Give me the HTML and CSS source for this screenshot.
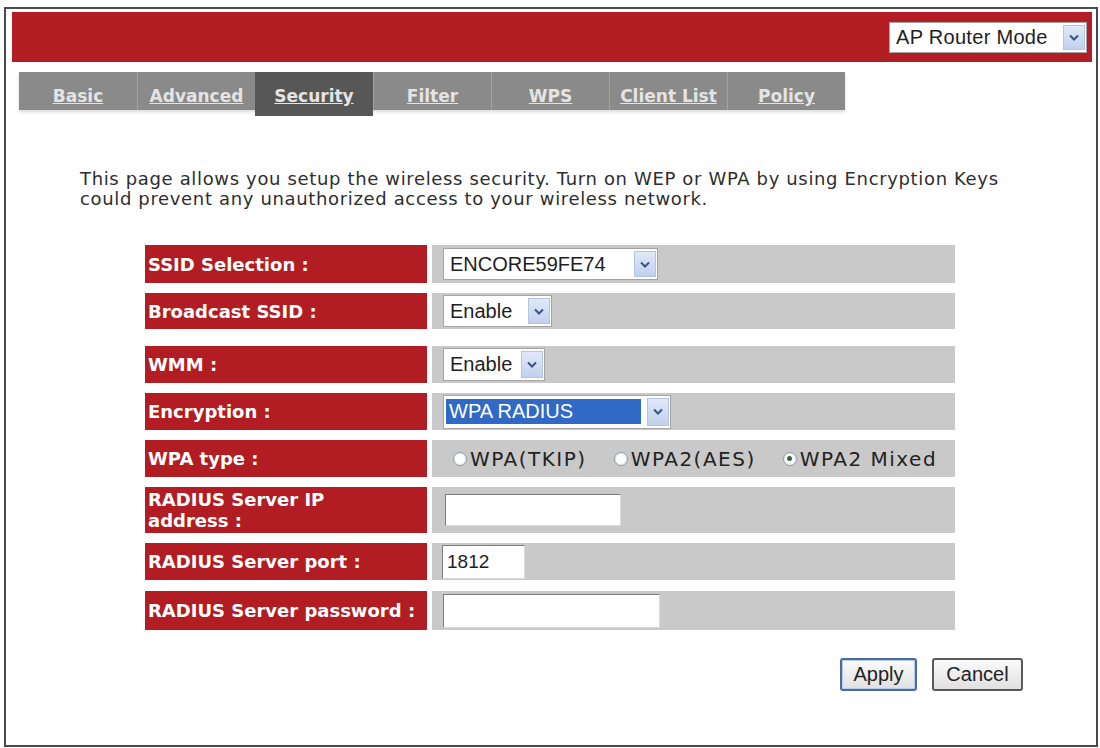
FILE: index.html
```html
<!DOCTYPE html>
<html lang="en">
<head>
    <meta charset="UTF-8">
    <meta name="viewport" content="width=device-width, initial-scale=1.0">
    <title>Wireless Security</title>
    <link rel="stylesheet" href="styles.css">
</head>
<body>
    <div class="frame">
        <div class="topbar">
            <div class="sel mode">
                <span>AP Router Mode</span>
                <i class="arr"><svg width="10" height="7" viewBox="0 0 10 7"><path d="M1 1.5L5 5.5L9 1.5" fill="none" stroke="#36548c" stroke-width="2"/></svg></i>
            </div>
        </div>

        <ul class="tabs">
            <li><a href="#">Basic</a></li>
            <li><a href="#">Advanced</a></li>
            <li class="on"><a href="#">Security</a></li>
            <li><a href="#">Filter</a></li>
            <li><a href="#">WPS</a></li>
            <li><a href="#">Client List</a></li>
            <li><a href="#">Policy</a></li>
        </ul>

        <p class="intro">This page allows you setup the wireless security. Turn on WEP or WPA by using Encryption Keys<br>could prevent any unauthorized access to your wireless network.</p>

        <div class="form">
            <div class="row">
                <div class="lbl">SSID Selection :</div>
                <div class="val">
                    <div class="sel ssid">
                        <span>ENCORE59FE74</span>
                        <i class="arr"><svg width="10" height="7" viewBox="0 0 10 7"><path d="M1 1.5L5 5.5L9 1.5" fill="none" stroke="#36548c" stroke-width="2"/></svg></i>
                    </div>
                </div>
            </div>
            <div class="row short">
                <div class="lbl">Broadcast SSID :</div>
                <div class="val">
                    <div class="sel bcast">
                        <span>Enable</span>
                        <i class="arr"><svg width="10" height="7" viewBox="0 0 10 7"><path d="M1 1.5L5 5.5L9 1.5" fill="none" stroke="#36548c" stroke-width="2"/></svg></i>
                    </div>
                </div>
            </div>
            <div class="row wmm-row">
                <div class="lbl">WMM :</div>
                <div class="val">
                    <div class="sel wmm">
                        <span>Enable</span>
                        <i class="arr"><svg width="10" height="7" viewBox="0 0 10 7"><path d="M1 1.5L5 5.5L9 1.5" fill="none" stroke="#36548c" stroke-width="2"/></svg></i>
                    </div>
                </div>
            </div>
            <div class="row">
                <div class="lbl">Encryption :</div>
                <div class="val">
                    <div class="sel enc">
                        <span class="hl">WPA RADIUS</span>
                        <i class="arr"><svg width="10" height="7" viewBox="0 0 10 7"><path d="M1 1.5L5 5.5L9 1.5" fill="none" stroke="#36548c" stroke-width="2"/></svg></i>
                    </div>
                </div>
            </div>
            <div class="row">
                <div class="lbl">WPA type :</div>
                <div class="val radios">
                    <label class="radio"><input type="radio" name="wpa">WPA(TKIP)</label>
                    <label class="radio"><input type="radio" name="wpa">WPA2(AES)</label>
                    <label class="radio"><input type="radio" name="wpa" checked>WPA2 Mixed</label>
                </div>
            </div>
            <div class="row tall">
                <div class="lbl">RADIUS Server IP<br>address :</div>
                <div class="val"><input class="txt ip" type="text"></div>
            </div>
            <div class="row">
                <div class="lbl">RADIUS Server port :</div>
                <div class="val"><input class="txt port" type="text" value="1812"></div>
            </div>
            <div class="row last">
                <div class="lbl">RADIUS Server password :</div>
                <div class="val"><input class="txt pass" type="password"></div>
            </div>
        </div>

        <div class="btns">
            <button class="btn apply">Apply</button>
            <button class="btn cancel">Cancel</button>
        </div>
    </div>
</body>
</html>
```

FILE: styles.css
```css
body{
    margin: 0;
    background: #fff;
    font-family: "DejaVu Sans", Verdana, sans-serif;
}
.frame{
    box-sizing: border-box;
    width: 1094px;
    height: 740px;
    margin: 7px 0 0 4px;
    border: 2px solid #4a4a4a;
    padding: 3px 4px 0 6px;
}

/* red header with mode picker */
.topbar{
    box-sizing: border-box;
    height: 50px;
    background: #b21e23;
    display: flex;
    justify-content: flex-end;
    align-items: flex-start;
    padding: 10px 5px 0 0;
}
.sel{
    box-sizing: border-box;
    display: flex;
    align-items: center;
    justify-content: space-between;
    background: #fff;
    border: 1px solid #a4a4a4;
    padding-left: 6px;
    font-family: "Liberation Sans", Arial, sans-serif;
    font-size: 20px;
    color: #1e1e1e;
}
.sel .arr{
    box-sizing: border-box;
    width: 22px;
    height: calc(100% - 4px);
    margin-right: 1px;
    display: flex;
    align-items: center;
    justify-content: center;
    background: linear-gradient(#e1e9f8, #c2d0ee);
    border: 1px solid #b4c4e4;
}
.mode{
    width: 198px;
    height: 31px;
    letter-spacing: 0.3px;
}

/* tabs */
.tabs{
    list-style: none;
    margin: 10px 0 0 7px;
    padding: 0;
    width: 826px;
    display: grid;
    grid-template-columns: repeat(7, 118px);
    grid-template-rows: 38px;
    background: #8a8a8a;
    box-shadow: 0 2px 3px rgba(0,0,0,0.15);
}
.tabs li{
    box-sizing: border-box;
    height: 38px;
    padding-top: 10px;
    display: flex;
    align-items: center;
    justify-content: center;
}
.tabs li + li{
    border-left: 1px solid #a2a2a2;
}
.tabs li.on{
    height: 44px;
    padding-bottom: 6px;
    background: #575757;
    border-left: none;
}
.tabs a{
    color: #e4e4e4;
    font-weight: bold;
    font-size: 17px;
    text-decoration: underline;
}

.intro{
    margin: 59px 0 0 68px;
    font-size: 18px;
    line-height: 20px;
    letter-spacing: 0.65px;
    color: #2e2e2e;
}

/* settings table */
.form{
    margin: 36px 0 0 133px;
}
.row{
    display: grid;
    grid-template-columns: 282px 523px;
    column-gap: 5px;
    height: 37px;
    margin-bottom: 10px;
}
.row:first-child{
    height: 38px;
}
.row.short{
    height: 36px;
}
.row.wmm-row{
    margin-top: 17px;
}
.row.tall{
    height: 46px;
}
.row.last{
    height: 39px;
    margin-top: 11px;
    margin-bottom: 0;
}
.lbl{
    display: flex;
    align-items: center;
    padding-left: 3px;
    background: #b11d22;
    color: #fff;
    font-weight: bold;
    font-size: 18px;
    line-height: 21px;
}
.val{
    display: flex;
    align-items: center;
    padding-left: 11px;
    background: #c9c9c9;
    overflow: hidden;
}
.ssid{
    width: 215px;
    height: 32px;
}
.bcast{
    width: 109px;
    height: 32px;
}
.wmm{
    width: 102px;
    height: 33px;
}
.enc{
    width: 228px;
    height: 34px;
    padding-left: 2px;
}
.enc .hl{
    box-sizing: border-box;
    width: 195px;
    height: 25px;
    padding-left: 3px;
    display: flex;
    align-items: center;
    background: #3169c6;
    color: #fff;
}

.radios{
    padding-left: 21px;
}
.radio{
    flex-shrink: 0;
    display: flex;
    align-items: center;
    margin-right: 27px;
    white-space: nowrap;
    font-size: 20px;
    letter-spacing: 1.5px;
    color: #222;
}
.radio input{
    appearance: none;
    flex-shrink: 0;
    box-sizing: border-box;
    width: 14px;
    height: 14px;
    margin: 0 3px 0 0;
    border: 1px solid #8d9cac;
    border-radius: 50%;
    background: radial-gradient(#fff 40%, #e2e2e2);
    display: grid;
    place-items: center;
}
.radio input:checked::after{
    content: "";
    width: 5px;
    height: 5px;
    border-radius: 50%;
    background: #2f6b35;
}

.txt{
    box-sizing: border-box;
    margin: 0;
    padding: 0 4px;
    border: 1px solid;
    border-color: #7c7c7c #dadada #dadada #7c7c7c;
    background: #fff;
    font-family: "Liberation Sans", Arial, sans-serif;
    font-size: 19px;
    color: #1e1e1e;
}
.ip{
    width: 176px;
    height: 32px;
    margin-left: 2px;
}
.port{
    width: 83px;
    height: 34px;
    margin-left: -1px;
}
.pass{
    width: 217px;
    height: 34px;
}

.btns{
    display: flex;
    justify-content: flex-end;
    gap: 15px;
    margin-top: 28px;
    padding-right: 69px;
}
.btn{
    height: 33px;
    padding: 0;
    border: 2px solid #5a5a5a;
    border-radius: 3px;
    background: linear-gradient(#fbfbfb, #e0e0e0);
    font-family: "Liberation Sans", Arial, sans-serif;
    font-size: 20px;
    color: #222;
}
.apply{
    width: 77px;
    border-color: #4d6aa0;
    box-shadow: inset 0 0 0 1px #b9cdee;
}
.cancel{
    width: 91px;
}
```
